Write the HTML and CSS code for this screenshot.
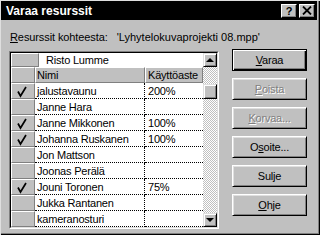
FILE: index.html
```html
<!DOCTYPE html>
<html>
<head>
<meta charset="utf-8">
<link rel="stylesheet" href="styles.css">
</head>
<body>
<div class="dialog">
  <div class="titlebar">
    <span class="title">Varaa resurssit</span>
    <div class="tbtns">
      <span class="tbtn q">?</span>
      <span class="tbtn x"><svg width="10" height="9" viewBox="0 0 10 9"><path d="M1 0.5 L9 8.5 M9 0.5 L1 8.5" stroke="#000" stroke-width="1.8"/></svg></span>
    </div>
  </div>
  <div class="content">
    <div class="label"><span class="lbl"><u>R</u>esurssit kohteesta:</span><span class="file">'Lyhytelokuvaprojekti 08.mpp'</span></div>
    <div class="main">
      <div class="grid-outer">
        <div class="grid-inner">
          <div class="table">
            <div class="editrow"><div class="erh"></div><div class="edit">Risto Lumme</div></div>
            <div class="row head"><div class="rh"></div><div class="c1 hc">Nimi</div><div class="c2 hc">Käyttöaste</div></div>
            <div class="row"><div class="rh"><svg class="chk" width="22" height="14" viewBox="0 0 22 14"><polyline points="6,7.5 8.5,12 14,3" fill="none" stroke="#000" stroke-width="1.7"/></svg></div><div class="c1">jalustavaunu</div><div class="c2">200%</div></div>
            <div class="row"><div class="rh"></div><div class="c1">Janne Hara</div><div class="c2"></div></div>
            <div class="row"><div class="rh"><svg class="chk" width="22" height="14" viewBox="0 0 22 14"><polyline points="6,7.5 8.5,12 14,3" fill="none" stroke="#000" stroke-width="1.7"/></svg></div><div class="c1">Janne Mikkonen</div><div class="c2">100%</div></div>
            <div class="row"><div class="rh"><svg class="chk" width="22" height="14" viewBox="0 0 22 14"><polyline points="6,7.5 8.5,12 14,3" fill="none" stroke="#000" stroke-width="1.7"/></svg></div><div class="c1">Johanna Ruskanen</div><div class="c2">100%</div></div>
            <div class="row"><div class="rh"></div><div class="c1">Jon Mattson</div><div class="c2"></div></div>
            <div class="row"><div class="rh"></div><div class="c1">Joonas Perälä</div><div class="c2"></div></div>
            <div class="row"><div class="rh"><svg class="chk" width="22" height="14" viewBox="0 0 22 14"><polyline points="6,7.5 8.5,12 14,3" fill="none" stroke="#000" stroke-width="1.7"/></svg></div><div class="c1">Jouni Toronen</div><div class="c2">75%</div></div>
            <div class="row"><div class="rh"></div><div class="c1">Jukka Rantanen</div><div class="c2"></div></div>
            <div class="row"><div class="rh"></div><div class="c1">kameranosturi</div><div class="c2"></div></div>
          </div>
          <div class="scrollbar">
            <div class="sbtn"><span class="tri-up"></span></div>
            <div class="thumb"></div>
            <div class="sbtn down"><span class="tri-down"></span></div>
          </div>
        </div>
      </div>
      <div class="buttons">
        <div class="btn default"><span><u>V</u>araa</span></div>
        <div class="btn disabled"><span><u>P</u>oista</span></div>
        <div class="btn disabled"><span><u>K</u>orvaa...</span></div>
        <div class="btn"><span>O<u>s</u>oite...</span></div>
        <div class="btn"><span>Sulje</span></div>
        <div class="btn"><span><u>O</u>hje</span></div>
      </div>
    </div>
  </div>
</div>
</body>
</html>
```
FILE: styles.css
```css
html, body {
  margin: 0;
  padding: 0;
  background: #c0c0c0;
}
body {
  font-family: "Liberation Sans", Arial, sans-serif;
  font-size: 11px;
  letter-spacing: -0.2px;
  color: #000;
}
u { text-decoration: underline; text-underline-offset: 1px; }
.dialog {
  width: 320px;
  height: 235px;
  box-sizing: border-box;
  padding: 1px 3px 3px 1px;
  background: #c0c0c0;
  box-shadow: inset 1px 1px #dfdfdf, inset -1px -1px #000, inset -2px -2px #808080;
  display: flex;
  flex-direction: column;
}
.titlebar {
  height: 19px;
  background: #000;
  color: #fff;
  display: flex;
  align-items: center;
  padding-left: 5px;
}
.title {
  font-weight: bold;
  font-size: 12px;
  letter-spacing: 0;
}
.tbtns {
  margin-left: auto;
  margin-right: 2px;
  display: flex;
  gap: 2px;
}
.tbtn {
  width: 16px;
  height: 14px;
  box-sizing: border-box;
  background: #c0c0c0;
  border: 1px solid;
  border-color: #fff #000 #000 #fff;
  box-shadow: inset -1px -1px #808080;
  display: flex;
  align-items: center;
  justify-content: center;
  color: #000;
  font-weight: bold;
  font-size: 11px;
  letter-spacing: 0;
}
.content {
  padding: 10px 0 0 8px;
}
.label {
  height: 14px;
  line-height: 14px;
  padding-left: 1px;
  display: flex;
}
.lbl { letter-spacing: -0.1px; }
.file { margin-left: 9px; letter-spacing: 0; }
.main {
  margin-top: 5px;
  display: flex;
  align-items: flex-start;
}
.grid-outer {
  margin-top: 2px;
  width: 210px;
  height: 178px;
  box-sizing: border-box;
  border: 1px solid;
  border-color: #808080 #fff #fff #808080;
}
.grid-inner {
  height: 100%;
  box-sizing: border-box;
  border: 1px solid;
  border-color: #000 #dfdfdf #dfdfdf #000;
  display: flex;
}
.table {
  width: 192px;
  background: #fff;
}
.editrow {
  height: 14px;
  display: flex;
}
.erh {
  width: 28px;
  box-sizing: border-box;
  background: #c0c0c0;
  border-left: 1px solid #fff;
  border-top: 1px solid #fff;
  border-right: 1px solid #808080;
  border-bottom: 1px solid #808080;
}
.edit {
  flex: 1;
  padding-left: 7px;
  line-height: 14px;
  background: #fff;
}
.row {
  height: 16px;
  display: flex;
}
.rh {
  width: 24px;
  box-sizing: border-box;
  background: #c0c0c0;
  border-left: 1px solid #fff;
  border-top: 1px solid #fff;
  border-right: 1px solid #808080;
  border-bottom: 1px solid #808080;
  display: flex;
  align-items: center;
}
.chk { display: block; }
.c1, .c2 {
  box-sizing: border-box;
  display: flex;
  align-items: center;
  border-bottom: 1px dotted #000;
  white-space: nowrap;
  overflow: hidden;
}
.c1 {
  width: 110px;
  padding-left: 2px;
  border-right: 1px dotted #000;
}
.c2 {
  width: 58px;
  padding-left: 3px;
}
.hc {
  background: #c0c0c0;
  border: 1px solid;
  border-color: #fff #808080 #808080 #fff;
}
.c1.hc { padding-left: 1px; }
.c2.hc { padding-left: 2px; }
.scrollbar {
  width: 14px;
  display: flex;
  flex-direction: column;
  background: repeating-conic-gradient(#fff 0 25%, #c0c0c0 0 50%) 0 0 / 2px 2px;
}
.sbtn, .thumb {
  width: 14px;
  height: 14px;
  box-sizing: border-box;
  background: #c0c0c0;
  border: 1px solid;
  border-color: #dfdfdf #000 #000 #dfdfdf;
  box-shadow: inset 1px 1px #fff, inset -1px -1px #808080;
  display: flex;
  align-items: center;
  justify-content: center;
}
.thumb {
  margin-top: 17px;
  height: 15px;
}
.sbtn.down { margin-top: auto; }
.tri-up {
  width: 0; height: 0;
  border-left: 4px solid transparent;
  border-right: 4px solid transparent;
  border-bottom: 4px solid #000;
}
.tri-down {
  width: 0; height: 0;
  border-left: 4px solid transparent;
  border-right: 4px solid transparent;
  border-top: 4px solid #000;
}
.buttons {
  margin-left: 13px;
  display: flex;
  flex-direction: column;
  gap: 7px;
}
.btn {
  width: 75px;
  height: 22px;
  box-sizing: border-box;
  border: 1px solid;
  border-color: #fff #000 #000 #fff;
  box-shadow: inset 1px 1px #dfdfdf, inset -1px -1px #808080;
  display: flex;
  align-items: center;
  justify-content: center;
}
.btn.default {
  border: 1px solid #000;
  box-shadow: inset 1px 1px #fff, inset -1px -1px #000, inset -2px -2px #808080;
}
.btn.disabled {
  color: #808080;
  text-shadow: 1px 1px #fff;
}
```
